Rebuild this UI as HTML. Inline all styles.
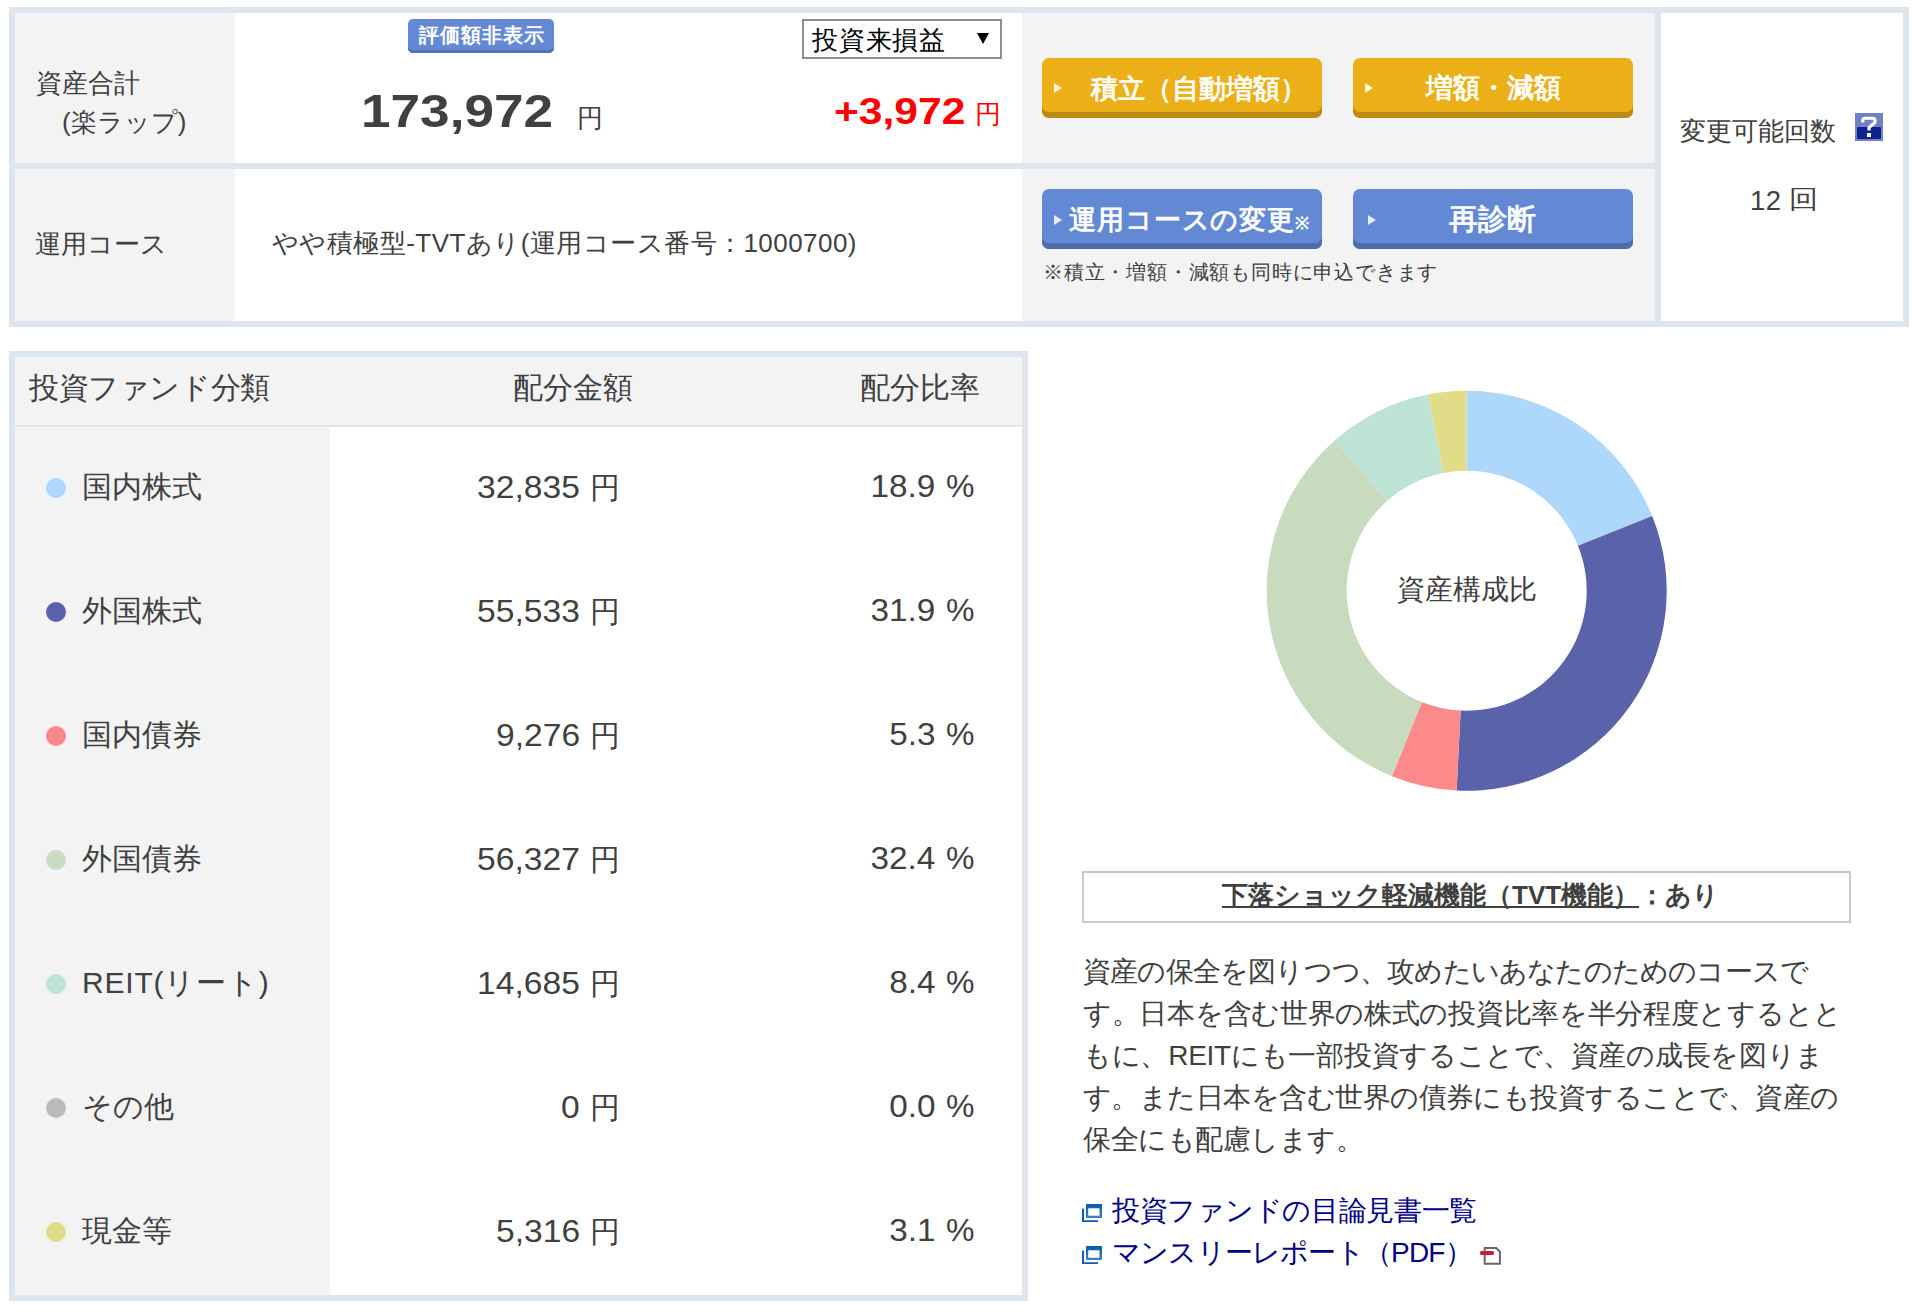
<!DOCTYPE html>
<html><head><meta charset="utf-8">
<style>
*{margin:0;padding:0;box-sizing:border-box}
html,body{width:1912px;height:1314px;background:#fff;overflow:hidden}
body{position:relative;font-family:"Liberation Sans",sans-serif;color:#404040}
.a{position:absolute;white-space:nowrap}
</style></head><body>
<div class="a" style="left:9px;top:7px;width:1900px;height:320px;background:#dee5ec"></div>
<div class="a" style="left:15px;top:13px;width:220px;height:150px;background:#f3f3f3"></div>
<div class="a" style="left:235px;top:13px;width:787px;height:150px;background:#fff"></div>
<div class="a" style="left:1022px;top:13px;width:633px;height:150px;background:#f3f3f3"></div>
<div class="a" style="left:15px;top:169px;width:220px;height:152px;background:#f3f3f3"></div>
<div class="a" style="left:235px;top:169px;width:787px;height:152px;background:#fff"></div>
<div class="a" style="left:1022px;top:169px;width:633px;height:152px;background:#f3f3f3"></div>
<div class="a" style="left:1661px;top:13px;width:242px;height:308px;background:#fff"></div>
<div class="a" style="left:36px;top:70px;font-size:26px;line-height:26px;">資産合計</div>
<div class="a" style="left:62px;top:109px;font-size:26px;line-height:26px;">(楽ラップ)</div>
<div class="a" style="left:408px;top:19px;width:146px;height:34px;background:#6389d4;border-radius:5px;box-shadow:inset 0 -3px 0 #5072b8"></div>
<div class="a" style="left:419px;top:25px;font-size:20px;line-height:20px;color:#fff;font-weight:bold;letter-spacing:1.1px;">評価額非表示</div>
<div class="a" style="left:361px;top:88px;font-size:46px;line-height:46px;font-weight:bold;transform:scaleX(1.155);transform-origin:0 0;">173,972</div>
<div class="a" style="left:577px;top:105px;font-size:26px;line-height:26px;">円</div>
<div class="a" style="left:802px;top:19px;width:200px;height:40px;border:2px solid #8e8e8e;background:#fff"></div>
<div class="a" style="left:812px;top:27px;font-size:26px;line-height:26px;color:#000;letter-spacing:0.8px;">投資来損益</div>
<div class="a" style="left:977px;top:33px;width:0;height:0;border-style:solid;border-width:11px 6px 0 6px;border-color:#000 transparent transparent transparent"></div>
<div class="a" style="left:834px;top:93px;font-size:37px;line-height:37px;color:#f00;font-weight:bold;transform:scaleX(1.15);transform-origin:0 0;">+3,972</div>
<div class="a" style="left:975px;top:101px;font-size:26px;line-height:26px;color:#f00;">円</div>
<div class="a" style="left:1042px;top:58px;width:280px;height:60px;background:#ebaf17;border-radius:7px;box-shadow:inset 0 -6px 0 #bc8a14"></div>
<div class="a" style="left:1054px;top:83px;width:0;height:0;border-style:solid;border-width:5.5px 0 5.5px 8px;border-color:transparent transparent transparent rgba(255,255,255,.85)"></div>
<div class="a" style="left:1091px;top:76px;font-size:27px;line-height:27px;color:#fff;font-weight:bold;">積立（自動増額）</div>
<div class="a" style="left:1353px;top:58px;width:280px;height:60px;background:#ebaf17;border-radius:7px;box-shadow:inset 0 -6px 0 #bc8a14"></div>
<div class="a" style="left:1365px;top:83px;width:0;height:0;border-style:solid;border-width:5.5px 0 5.5px 8px;border-color:transparent transparent transparent rgba(255,255,255,.85)"></div>
<div class="a" style="left:1426px;top:75px;font-size:27px;line-height:27px;color:#fff;font-weight:bold;">増額・減額</div>
<div class="a" style="left:1042px;top:189px;width:280px;height:60px;background:#6389d4;border-radius:7px;box-shadow:inset 0 -6px 0 #4f6dac"></div>
<div class="a" style="left:1054px;top:215px;width:0;height:0;border-style:solid;border-width:5.5px 0 5.5px 8px;border-color:transparent transparent transparent rgba(255,255,255,.85)"></div>
<div class="a" style="left:1069px;top:207px;font-size:27px;line-height:27px;color:#fff;font-weight:bold;letter-spacing:0.9px;">運用コースの変更<span style="font-size:17px">※</span></div>
<div class="a" style="left:1353px;top:189px;width:280px;height:60px;background:#6389d4;border-radius:7px;box-shadow:inset 0 -6px 0 #4f6dac"></div>
<div class="a" style="left:1368px;top:215px;width:0;height:0;border-style:solid;border-width:5.5px 0 5.5px 8px;border-color:transparent transparent transparent rgba(255,255,255,.85)"></div>
<div class="a" style="left:1449px;top:205px;font-size:28.5px;line-height:28.5px;color:#fff;font-weight:bold;">再診断</div>
<div class="a" style="left:1043px;top:262px;font-size:20px;line-height:20px;letter-spacing:0.8px;">※積立・増額・減額も同時に申込できます</div>
<div class="a" style="left:1680px;top:118px;font-size:26px;line-height:26px;">変更可能回数</div>
<div class="a" style="left:1855px;top:113px;width:28px;height:28px;background:#7483c6"></div>
<div class="a" style="left:1857px;top:128px;width:24px;height:11px;background:#1b2b91"></div>
<svg class="a" style="left:1855px;top:113px" width="28" height="28" viewBox="0 0 28 28"><rect x="0" y="0" width="28" height="28" fill="#7080c0"/><rect x="2" y="14" width="24" height="12" rx="1" fill="#10228e"/><path d="M7.8 9.5V7.2Q7.8 5.2 10 5.2H17.5Q20 5.2 20 7.5V9.5L14 14.5V17.5" fill="none" stroke="#fff" stroke-width="3.1" stroke-linejoin="round"/><rect x="12" y="20" width="4" height="4" fill="#fff"/></svg>
<div class="a" style="left:1750px;top:186.5px;font-size:27.5px;line-height:27.5px;letter-spacing:0.5px;">12</div>
<div class="a" style="left:1789px;top:186px;font-size:26px;line-height:26px;transform:scaleX(1.12);transform-origin:0 0;">回</div>
<div class="a" style="left:35px;top:231px;font-size:26px;line-height:26px;">運用コース</div>
<div class="a" style="left:272px;top:230px;font-size:26px;line-height:26px;letter-spacing:0.45px;">やや積極型-TVTあり(運用コース番号：1000700)</div>
<div class="a" style="left:9px;top:351px;width:1019px;height:950px;background:#dee5ec"></div>
<div class="a" style="left:15px;top:357px;width:1007px;height:68px;background:#f3f3f3"></div>
<div class="a" style="left:15px;top:427px;width:315px;height:868px;background:#f3f3f3"></div>
<div class="a" style="left:330px;top:427px;width:692px;height:868px;background:#fff"></div>
<div class="a" style="left:29px;top:373px;font-size:30px;line-height:30px;letter-spacing:-0.4px;">投資ファンド分類</div>
<div class="a" style="left:513px;top:373px;font-size:30px;line-height:30px;">配分金額</div>
<div class="a" style="left:860px;top:373px;font-size:30px;line-height:30px;">配分比率</div>
<div class="a" style="left:46px;top:477.5px;width:20px;height:20px;background:#aed7fc;border-radius:50%"></div>
<div class="a" style="left:82px;top:472px;font-size:30px;line-height:30px;letter-spacing:0px;">国内株式</div>
<div class="a" style="right:1332px;top:470.5px;font-size:32px;line-height:32px;transform:scaleX(1.05);transform-origin:100% 0;">32,835</div>
<div class="a" style="left:590px;top:472.5px;font-size:30px;line-height:30px;">円</div>
<div class="a" style="right:977px;top:470px;font-size:32px;line-height:32px;transform:scaleX(1.04);transform-origin:100% 0;">18.9</div>
<div class="a" style="left:946px;top:470px;font-size:32px;line-height:32px;">%</div>
<div class="a" style="left:46px;top:601.5px;width:20px;height:20px;background:#5a63aa;border-radius:50%"></div>
<div class="a" style="left:82px;top:596px;font-size:30px;line-height:30px;letter-spacing:0px;">外国株式</div>
<div class="a" style="right:1332px;top:594.5px;font-size:32px;line-height:32px;transform:scaleX(1.05);transform-origin:100% 0;">55,533</div>
<div class="a" style="left:590px;top:596.5px;font-size:30px;line-height:30px;">円</div>
<div class="a" style="right:977px;top:594px;font-size:32px;line-height:32px;transform:scaleX(1.04);transform-origin:100% 0;">31.9</div>
<div class="a" style="left:946px;top:594px;font-size:32px;line-height:32px;">%</div>
<div class="a" style="left:46px;top:725.5px;width:20px;height:20px;background:#fd8a8a;border-radius:50%"></div>
<div class="a" style="left:82px;top:720px;font-size:30px;line-height:30px;letter-spacing:0px;">国内債券</div>
<div class="a" style="right:1332px;top:718.5px;font-size:32px;line-height:32px;transform:scaleX(1.05);transform-origin:100% 0;">9,276</div>
<div class="a" style="left:590px;top:720.5px;font-size:30px;line-height:30px;">円</div>
<div class="a" style="right:977px;top:718px;font-size:32px;line-height:32px;transform:scaleX(1.04);transform-origin:100% 0;">5.3</div>
<div class="a" style="left:946px;top:718px;font-size:32px;line-height:32px;">%</div>
<div class="a" style="left:46px;top:849.5px;width:20px;height:20px;background:#c8dbbe;border-radius:50%"></div>
<div class="a" style="left:82px;top:844px;font-size:30px;line-height:30px;letter-spacing:0px;">外国債券</div>
<div class="a" style="right:1332px;top:842.5px;font-size:32px;line-height:32px;transform:scaleX(1.05);transform-origin:100% 0;">56,327</div>
<div class="a" style="left:590px;top:844.5px;font-size:30px;line-height:30px;">円</div>
<div class="a" style="right:977px;top:842px;font-size:32px;line-height:32px;transform:scaleX(1.04);transform-origin:100% 0;">32.4</div>
<div class="a" style="left:946px;top:842px;font-size:32px;line-height:32px;">%</div>
<div class="a" style="left:46px;top:973.5px;width:20px;height:20px;background:#bde3d5;border-radius:50%"></div>
<div class="a" style="left:82px;top:968px;font-size:30px;line-height:30px;letter-spacing:0.8px;">REIT(リート)</div>
<div class="a" style="right:1332px;top:966.5px;font-size:32px;line-height:32px;transform:scaleX(1.05);transform-origin:100% 0;">14,685</div>
<div class="a" style="left:590px;top:968.5px;font-size:30px;line-height:30px;">円</div>
<div class="a" style="right:977px;top:966px;font-size:32px;line-height:32px;transform:scaleX(1.04);transform-origin:100% 0;">8.4</div>
<div class="a" style="left:946px;top:966px;font-size:32px;line-height:32px;">%</div>
<div class="a" style="left:46px;top:1097.5px;width:20px;height:20px;background:#bbbbbb;border-radius:50%"></div>
<div class="a" style="left:82px;top:1092px;font-size:30px;line-height:30px;letter-spacing:0px;">その他</div>
<div class="a" style="right:1332px;top:1090.5px;font-size:32px;line-height:32px;transform:scaleX(1.05);transform-origin:100% 0;">0</div>
<div class="a" style="left:590px;top:1092.5px;font-size:30px;line-height:30px;">円</div>
<div class="a" style="right:977px;top:1090px;font-size:32px;line-height:32px;transform:scaleX(1.04);transform-origin:100% 0;">0.0</div>
<div class="a" style="left:946px;top:1090px;font-size:32px;line-height:32px;">%</div>
<div class="a" style="left:46px;top:1221.5px;width:20px;height:20px;background:#e0dc88;border-radius:50%"></div>
<div class="a" style="left:82px;top:1216px;font-size:30px;line-height:30px;letter-spacing:0px;">現金等</div>
<div class="a" style="right:1332px;top:1214.5px;font-size:32px;line-height:32px;transform:scaleX(1.05);transform-origin:100% 0;">5,316</div>
<div class="a" style="left:590px;top:1216.5px;font-size:30px;line-height:30px;">円</div>
<div class="a" style="right:977px;top:1214px;font-size:32px;line-height:32px;transform:scaleX(1.04);transform-origin:100% 0;">3.1</div>
<div class="a" style="left:946px;top:1214px;font-size:32px;line-height:32px;">%</div>
<svg class="a" style="left:1266px;top:390px" width="402" height="402" viewBox="-200.7 -200.7 402 402"><path d="M0.00 -200.00A200 200 0 0 1 185.49 -74.79L111.29 -44.88A120 120 0 0 0 0.00 -120.00Z" fill="#aed7fc"/><path d="M185.49 -74.79A200 200 0 0 1 -10.05 199.75L-6.03 119.85A120 120 0 0 0 111.29 -44.88Z" fill="#5a63aa"/><path d="M-10.05 199.75A200 200 0 0 1 -74.79 185.49L-44.88 111.29A120 120 0 0 0 -6.03 119.85Z" fill="#fd8a8a"/><path d="M-74.79 185.49A200 200 0 0 1 -132.26 -150.02L-79.36 -90.01A120 120 0 0 0 -44.88 111.29Z" fill="#c8dbbe"/><path d="M-132.26 -150.02A200 200 0 0 1 -38.71 -196.22L-23.23 -117.73A120 120 0 0 0 -79.36 -90.01Z" fill="#bde3d5"/><path d="M-38.71 -196.22A200 200 0 0 1 0.00 -200.00L0.00 -120.00A120 120 0 0 0 -23.23 -117.73Z" fill="#e0dc88"/></svg>
<div class="a" style="left:1397px;top:576px;font-size:28px;line-height:28px;">資産構成比</div>
<div class="a" style="left:1082px;top:871px;width:769px;height:52px;border:2px solid #c9c9c9"></div>
<div class="a" style="left:1222px;top:882px;font-size:26px;line-height:26px;font-weight:bold;"><span style="text-decoration:underline">下落ショック軽減機能（TVT機能）</span>：あり</div>
<div class="a" style="left:1083px;top:958px;font-size:28px;line-height:28px;letter-spacing:-0.8px;">資産の保全を図りつつ、攻めたいあなたのためのコースで</div>
<div class="a" style="left:1083px;top:1000px;font-size:28px;line-height:28px;letter-spacing:-0.3px;">す。日本を含む世界の株式の投資比率を半分程度とするとと</div>
<div class="a" style="left:1083px;top:1042px;font-size:28px;line-height:28px;letter-spacing:-0.27px;">もに、REITにも一部投資することで、資産の成長を図りま</div>
<div class="a" style="left:1083px;top:1084px;font-size:28px;line-height:28px;letter-spacing:-0.54px;">す。また日本を含む世界の債券にも投資することで、資産の</div>
<div class="a" style="left:1083px;top:1126px;font-size:28px;line-height:28px;letter-spacing:-0.5px;">保全にも配慮します。</div>
<svg class="a" style="left:1082px;top:1204px" width="21" height="18" viewBox="0 0 21 18"><defs><linearGradient id="wg" x1="0" y1="0" x2="0" y2="1"><stop offset="0" stop-color="#0559b2"/><stop offset="1" stop-color="#3d86c9"/></linearGradient></defs><path d="M0 4.8h2v11.4h14v1.8H0z" fill="#0b5db3"/><rect x="4" y="0" width="16" height="14" rx="0.8" fill="url(#wg)"/><rect x="6.2" y="4.3" width="11.3" height="7.4" rx="0.5" fill="#fff"/></svg>
<svg class="a" style="left:1082px;top:1246px" width="21" height="18" viewBox="0 0 21 18"><defs><linearGradient id="wg" x1="0" y1="0" x2="0" y2="1"><stop offset="0" stop-color="#0559b2"/><stop offset="1" stop-color="#3d86c9"/></linearGradient></defs><path d="M0 4.8h2v11.4h14v1.8H0z" fill="#0b5db3"/><rect x="4" y="0" width="16" height="14" rx="0.8" fill="url(#wg)"/><rect x="6.2" y="4.3" width="11.3" height="7.4" rx="0.5" fill="#fff"/></svg>
<div class="a" style="left:1112px;top:1197px;font-size:28px;line-height:28px;color:#000080;letter-spacing:-0.3px;">投資ファンドの目論見書一覧</div>
<div class="a" style="left:1112px;top:1239px;font-size:28px;line-height:28px;color:#000080;letter-spacing:-0.8px;">マンスリーレポート（PDF）</div>
<svg class="a" style="left:1480px;top:1247px" width="21" height="18" viewBox="0 0 21 18"><path d="M4.7 1H16.2L19.9 4.7V16.8H4.7Z" fill="#fff" stroke="#686868" stroke-width="2"/><rect x="0" y="4" width="14" height="4" rx="1.6" fill="#d0183a"/></svg>
</body></html>
